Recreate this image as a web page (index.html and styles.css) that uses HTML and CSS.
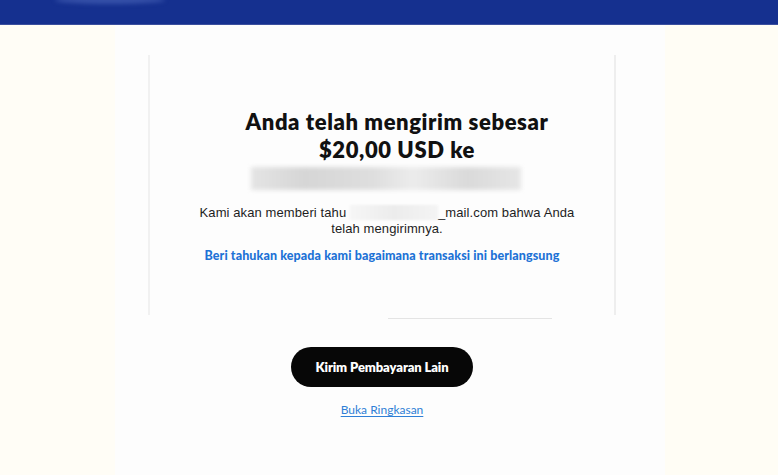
FILE: index.html
```html
<!DOCTYPE html>
<html lang="id">
<head>
<meta charset="utf-8">
<title>Pembayaran terkirim</title>
<link rel="stylesheet" href="styles.css">
</head>
<body>
<header class="topbar"><span class="topbar-glow"></span></header>
<main class="page">
  <aside class="side side-left"></aside>
  <section class="center">
    <div class="card">
      <h1 class="title">Anda telah mengirim sebesar<br>$20,00 USD ke</h1>
      <div class="recipient"></div>
      <p class="note">Kami akan memberi tahu <span class="mask"></span>_mail.com bahwa Anda<br>telah mengirimnya.</p>
      <a class="feedback" href="#">Beri tahukan kepada kami bagaimana transaksi ini berlangsung</a>
    </div>
    <div class="rule"></div>
    <div class="actions">
      <button class="primary" type="button">Kirim Pembayaran Lain</button>
      <a class="summary" href="#">Buka Ringkasan</a>
    </div>
  </section>
  <aside class="side side-right"></aside>
</main>
</body>
</html>
```
FILE: styles.css
```css
html, body {
  margin: 0;
  padding: 0;
}
body {
  width: 778px;
  height: 475px;
  overflow: hidden;
  background: #fdfdfc;
  font-family: "Liberation Sans", Arial, sans-serif;
  color: #1a1a1a;
}
.topbar {
  position: relative;
  height: 25px;
  background: #15308f;
  border-bottom: 1px solid #3b4f9e;
  box-sizing: border-box;
}
.topbar-glow {
  position: absolute;
  left: 55px;
  top: -4px;
  width: 110px;
  height: 8px;
  border-radius: 50%;
  background: #3550a8;
  filter: blur(2px);
}
.page {
  display: flex;
  height: 450px;
}
.side {
  flex: none;
}
.side-left {
  width: 115px;
  background: #fffdf6;
}
.side-right {
  flex: 1;
  background: #fffdf5;
}
.center {
  width: 550px;
  flex: none;
  background: #fdfdfd;
  display: flex;
  flex-direction: column;
  align-items: flex-start;
}
.card {
  margin: 30px 0 0 33px;
  width: 468px;
  height: 260px;
  box-sizing: border-box;
  border-left: 2px solid #f1f1f1;
  border-right: 2px solid #eeeeee;
  padding-top: 53px;
  display: flex;
  flex-direction: column;
  align-items: center;
  text-align: center;
}
.title {
  margin: 0 0 0 30px;
  font-family: Lato, "Liberation Sans", sans-serif;
  font-weight: 800;
  font-size: 22px;
  line-height: 28px;
  color: #111;
  letter-spacing: 0.6px;
}
.recipient {
  margin-top: 3px;
  margin-left: 8px;
  width: 270px;
  height: 23px;
  background: linear-gradient(90deg, #e4e4e4 0%, #d6d6d6 20%, #dedede 45%, #ececec 60%, #dadada 80%, #e6e6e6 100%);
  filter: blur(2px);
}
.note {
  margin: 15px 0 0 10px;
  font-size: 13px;
  line-height: 16px;
  color: #1e1e1e;
  letter-spacing: 0.1px;
}
.mask {
  display: inline-block;
  width: 88px;
  height: 15px;
  vertical-align: -3px;
  background: linear-gradient(90deg, #f6f6f6, #ececec 50%, #f4f4f4);
  filter: blur(1px);
}
.feedback {
  margin-top: 11px;
  font-family: Lato, "Liberation Sans", sans-serif;
  font-weight: 900;
  font-size: 12.5px;
  line-height: 16px;
  color: #1d72d6;
  text-decoration: none;
  letter-spacing: 0.1px;
}
.rule {
  margin: 3px 0 0 273px;
  width: 164px;
  height: 1px;
  background: #e4e4e4;
}
.actions {
  margin-left: 33px;
  width: 468px;
  display: flex;
  flex-direction: column;
  align-items: center;
}
.primary {
  margin-top: 28px;
  width: 182px;
  height: 40px;
  border: none;
  border-radius: 20px;
  background: #070707;
  color: #fff;
  font-family: Lato, "Liberation Sans", sans-serif;
  font-weight: 800;
  font-size: 13px;
  letter-spacing: -0.1px;
  cursor: pointer;
}
.summary {
  margin-top: 15px;
  font-family: Lato, "Liberation Sans", sans-serif;
  font-size: 12px;
  line-height: 16px;
  color: #2f7fd6;
  text-decoration: underline;
  text-underline-offset: 2px;
}
```
